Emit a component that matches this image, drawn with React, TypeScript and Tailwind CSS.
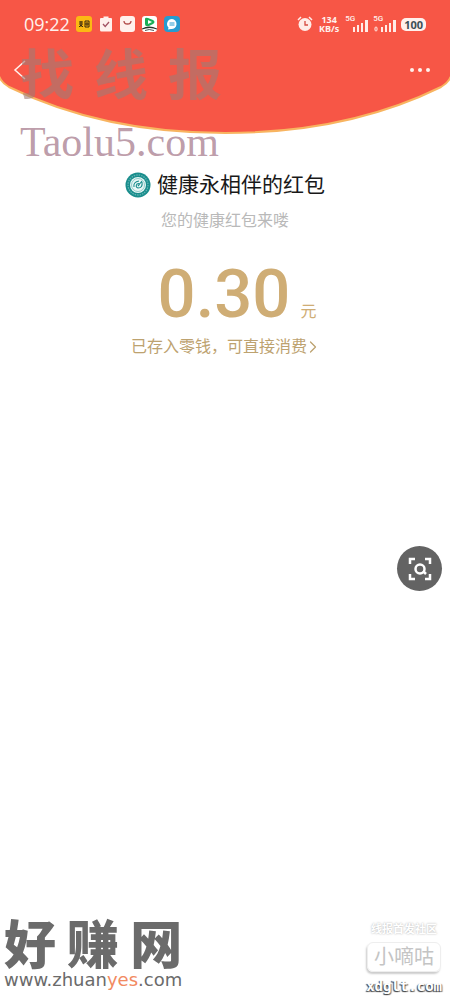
import { ChevronRight } from "lucide-react";

const sans = "font-['Roboto','Noto_Sans_CJK_SC',sans-serif]";

function HeaderCurve() {
  return (
    <svg
      className="absolute inset-0 h-full w-full"
      viewBox="0 0 450 135"
      preserveAspectRatio="none"
      aria-hidden="true"
    >
      <path
        d="M-2 -2V73Q0 82 9 87C74 119 145 133 225 133S376 119 441 87Q450 82 452 73V-2Z"
        fill="#f75646"
        stroke="#f8b460"
        strokeWidth="2"
      />
    </svg>
  );
}

function NotificationIcons() {
  return (
    <div className="flex items-center gap-1.5">
      <svg width="16" height="16" viewBox="0 0 16 16" aria-hidden="true">
        <rect width="16" height="16" rx="3" fill="#fcb913" />
        <path
          d="M3 6h4M5 5v6M3 8h4M3 11l2-2 2 2M9 5h4v6H9zM9 8h4M11 6v4"
          stroke="#3d2b10"
          fill="none"
        />
      </svg>
      <svg width="16" height="16" viewBox="0 0 16 16" aria-hidden="true">
        <path d="M3 2h2.500V.5h5V2H13q1 0 1 1v11q0 1.500-1.500 1.500h-9Q2 15.500 2 14V3q0-1 1-1Z" fill="#fff1ed" />
        <path d="m5 8 2.200 2.500L11 6" fill="none" stroke="#a35364" strokeWidth="1.300" />
      </svg>
      <svg width="16" height="16" viewBox="0 0 16 16" aria-hidden="true">
        <rect width="15" height="16" rx="3" fill="#fff1ed" />
        <path d="M4 5q0 3 3.500 3T11 5" fill="none" stroke="#b34d4b" strokeWidth="1.300" />
      </svg>
      <svg width="16" height="16" viewBox="0 0 16 16" aria-hidden="true">
        <rect width="15" height="16" rx="3" fill="#fff" />
        <path d="M3 3q0-2 3-1l5 2q3 2 0 4l-4 2q-4 1-4-2Z" fill="#1bae57" />
        <path d="m6 4 4 2-4 2Z" fill="#fff" />
        <path d="M0 12.500q7-4 15 0v1q-7-3-15 0Z" fill="#27352b" />
        <path d="M3 14.500q4-2 9 0" fill="none" stroke="#555" />
      </svg>
      <svg width="16" height="16" viewBox="0 0 16 16" aria-hidden="true">
        <rect width="16" height="16" rx="4" fill="#279bd0" />
        <path d="M8 3a5 5 0 1 1-1 10l-3 .5.5-2A5 5 0 0 1 8 3Z" fill="#fff" />
        <path d="M5.500 7h5M5.500 9h5" stroke="#279bd0" />
      </svg>
    </div>
  );
}

function Signal({ dual = false }: { dual?: boolean }) {
  return (
    <div className="relative h-4 w-6">
      <span className="absolute -top-px left-0 text-[8px] leading-[8px] font-medium">5G</span>
      <svg className="h-4 w-6" viewBox="0 0 24 16" fill="#ffece8" aria-hidden="true">
        {dual && <rect x="2" y="11" width="2" height="4" rx="1" fill="none" stroke="#ffece8" />}
        <path d="M8 11h2v5H8zM12 9h2v7h-2zM16 7h2v9h-2zM20 4h3v12h-3z" />
      </svg>
    </div>
  );
}

function StatusBar() {
  return (
    <div className="flex h-12 items-center justify-between px-6 text-[#fff1ed]">
      <div className="flex items-center gap-1.5">
        <span className="font-['Open_Sans',sans-serif] text-[18px] leading-5 font-medium">09:22</span>
        <NotificationIcons />
      </div>
      <div className="flex items-center gap-1">
        <svg width="16" height="16" viewBox="0 0 16 16" aria-hidden="true">
          <circle cx="8" cy="8.500" r="6.500" fill="#ffece8" />
          <path d="m1 4 3-3M15 4l-3-3" stroke="#ffece8" strokeWidth="1.500" />
          <path d="M8 5v4h3" fill="none" stroke="#d64c42" strokeWidth="1.300" />
        </svg>
        <div className="flex w-6 flex-col items-center font-['Open_Sans',sans-serif] text-[9px] leading-[9px] font-bold">
          <span>134</span>
          <span>KB/s</span>
        </div>
        <Signal />
        <Signal dual />
        <span className="rounded-[5px] bg-[#fff1ed] px-[3px] font-['Open_Sans',sans-serif] text-[11px] leading-[13px] font-bold text-[#3d5058]">
          100
        </span>
      </div>
    </div>
  );
}

function SenderLogo() {
  return (
    <svg width="26" height="26" viewBox="0 0 26 26" fill="none" aria-hidden="true">
      <circle cx="13" cy="13" r="12.500" fill="#198d8c" />
      <circle cx="13" cy="13" r="10" stroke="#61b3b2" strokeWidth="1.300" strokeDasharray="1.500 1" />
      <circle cx="13" cy="13" r="8" fill="#e9f7f6" />
      <circle cx="13" cy="13" r="6.500" stroke="#7cc0be" strokeWidth="0.800" />
      <path d="M9 15q-1-5 5-6M17 10q1 6-4 6-3-1-1-4 3-1 2 1l-1 1 4-5" stroke="#198d8c" strokeWidth="1.100" />
    </svg>
  );
}

export default function App() {
  return (
    <div className={`relative flex min-h-screen flex-col bg-white ${sans}`}>
      <header className="relative h-[135px]">
        <HeaderCurve />
        <div className="relative">
          <StatusBar />
          <nav className="flex h-11 items-center justify-between px-5 text-[#fff1ed]">
            <button type="button" aria-label="返回" className="-ml-3">
              <svg width="24" height="24" viewBox="0 0 24 24" fill="none" stroke="currentColor" strokeWidth="1.500" aria-hidden="true">
                <path d="m17 3-10 9 10 9" />
              </svg>
            </button>
            <button type="button" aria-label="更多" className="flex gap-1">
              <span className="size-1 rounded-full bg-[#fff1ed]" />
              <span className="size-1 rounded-full bg-[#fff1ed]" />
              <span className="size-1 rounded-full bg-[#fff1ed]" />
            </button>
          </nav>
        </div>
      </header>

      {/* Watermark over the header */}
      <div className="pointer-events-none absolute top-10 left-5 flex w-[202px] flex-col whitespace-nowrap">
        <div className="flex justify-between font-['Noto_Sans_CJK_SC',sans-serif] text-[54px] leading-[64px] font-bold text-[#a07c74]/60">
          <span>找</span>
          <span>线</span>
          <span>报</span>
        </div>
        <span className="font-['Liberation_Serif',serif] text-[42px] leading-[76px] text-[#854961]/55">Taolu5.com</span>
      </div>

      <main className="flex flex-1 flex-col items-center pt-9">
        <h1 className="flex items-center gap-1.5 text-[21px] leading-7 font-medium text-[#191919]">
          <SenderLogo />
          <span className="font-normal">健康永相伴的红包</span>
        </h1>
        <p className="mt-2.5 text-base leading-6 text-[#b9b9b9]">您的健康红包来喽</p>
        <div className="mt-5 flex items-baseline gap-2.5 pl-6 text-[#cfad75]">
          <span className="text-[67px] leading-[82px] font-medium">0.30</span>
          <span className="text-base">元</span>
        </div>
        <a href="#balance" className="flex items-center text-base leading-6 text-[#bda26f]">
          已存入零钱，可直接消费
          <ChevronRight className="-mx-1 size-5" strokeWidth={1.5} />
        </a>
      </main>

      <button
        type="button"
        aria-label="识图"
        className="absolute top-[546px] right-2 flex size-[45px] items-center justify-center rounded-full bg-[#636363]"
      >
        <svg width="26" height="26" viewBox="0 0 26 26" fill="none" stroke="#fff" strokeWidth="2.500" aria-hidden="true">
          <path d="M3 8V3h5M18 3h5v5M23 18v5h-5M8 23H3v-5" />
          <circle cx="13" cy="13" r="4.500" />
          <path d="m16 15 3 3" />
        </svg>
      </button>

      <footer className="flex items-end justify-between pr-2 pb-1 pl-1 whitespace-nowrap">
        <div className="flex flex-col pb-2 text-[#6b6b6b]">
          <span className="flex justify-between font-['Noto_Sans_CJK_SC',sans-serif] text-[52px] leading-[60px] font-black">
            <span>好</span>
            <span>赚</span>
            <span>网</span>
          </span>
          <span className="font-['DejaVu_Sans',sans-serif] text-[18px] leading-4">
            www.zhuan<span className="text-[#f28a61]">yes</span>.com
          </span>
        </div>
        <div className="flex flex-col items-center text-[#c4c4c4]">
          <span className="text-[11px] leading-4 font-bold text-white [text-shadow:0_0_2px_#aaa]">线报首发社区</span>
          <span className="mt-1 rounded-md border border-[#eeeeee] px-1.5 text-[20px] leading-7 shadow-[-1px_2px_2px_#ccc]">
            小嘀咕
          </span>
          <span className="mt-1 font-['DejaVu_Sans_Mono',monospace] text-[14px] leading-5 font-bold text-white [text-shadow:-1px_1px_1px_#444,1px_1px_1px_#777]">
            xdglt.com
          </span>
        </div>
      </footer>
    </div>
  );
}
